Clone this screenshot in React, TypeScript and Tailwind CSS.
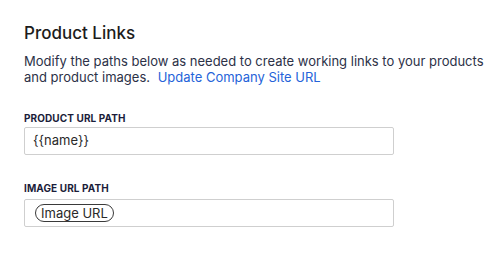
import React from "react";

// Product Links settings panel

const FONT = { fontFamily: "Inter, 'Noto Sans', sans-serif" };

function FieldLabel({ children }: { children: React.ReactNode }) {
  return (
    <label className="block text-[10px] font-bold uppercase leading-[14px] text-[#1b1d3a] tracking-[0.01em]">
      {children}
    </label>
  );
}

export default function App() {
  return (
    <div className="w-[500px] h-[268px] bg-white pl-6 pr-4 pt-[22px]" style={FONT}>
      <h2 className="text-[17px] leading-[22px] font-medium text-[#1c1c1c]">Product Links</h2>

      <p className="mt-[9px] text-[13px] leading-[16px] text-[#2c3147] max-w-[462px]">
        Modify the paths below as needed to create working links to your products and product images.{" "}
        <a href="#" className="ml-1 text-[#2563d9]">Update Company Site URL</a>
      </p>

      <div className="mt-[26px]">
        <FieldLabel>Product URL Path</FieldLabel>
        <div className="mt-[2px] w-[370px] h-[28px] border border-[#cfcfcf] rounded-[2px] px-2 flex items-center text-[13px] text-[#2a2a2a]">
          {"{{name}}"}
        </div>
      </div>

      <div className="mt-[26px]">
        <FieldLabel>Image URL Path</FieldLabel>
        <div className="mt-[4px] w-[370px] h-[28px] border border-[#cfcfcf] rounded-[2px] px-[10px] flex items-center">
          <span className="inline-flex items-center h-[18px] px-[5px] rounded-full border border-[#3a3a3a] text-[13px] leading-none text-[#2a2a2a]">
            Image URL
          </span>
        </div>
      </div>
    </div>
  );
}
